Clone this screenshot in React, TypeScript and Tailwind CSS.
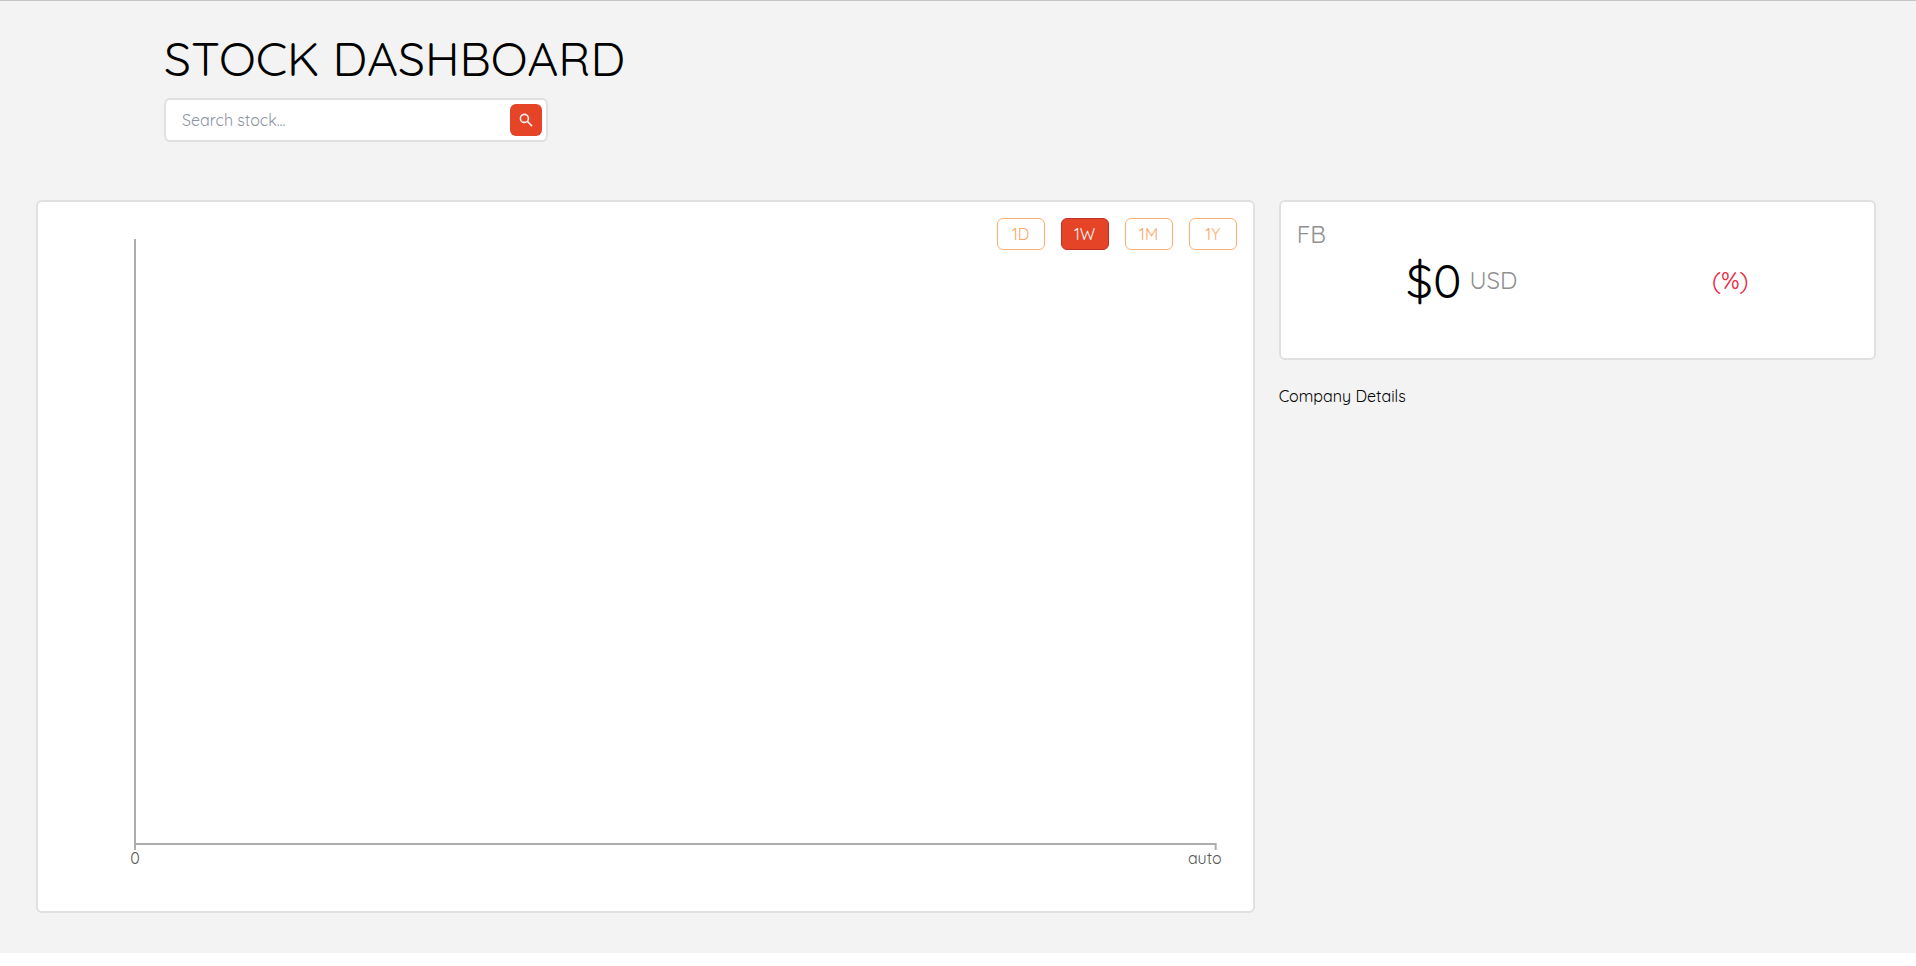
import { useState } from "react";

const RANGES = ["1D", "1W", "1M", "1Y"];

function Header() {
  return (
    <header className="pl-32">
      <h1 className="text-5xl">STOCK DASHBOARD</h1>
      <Search />
    </header>
  );
}

function Search() {
  const [query, setQuery] = useState("");
  return (
    <form
      className="mt-4 flex h-11 w-96 items-center rounded-md border-2 border-[#e0e0e0] bg-white pr-1"
      onSubmit={(e) => e.preventDefault()}
    >
      <input
        type="text"
        aria-label="Search stock"
        placeholder="Search stock..."
        value={query}
        onChange={(e) => setQuery(e.target.value)}
        className="min-w-0 flex-1 bg-transparent px-4 text-base outline-none placeholder:text-[#8b93a1]"
      />
      <button
        type="submit"
        aria-label="Search"
        className="flex size-8 items-center justify-center rounded-md bg-[#e64427] text-[#f3f3f3]"
      >
        <svg viewBox="0 0 20 20" fill="currentColor" className="size-4">
          <path
            fillRule="evenodd"
            clipRule="evenodd"
            d="M8 4a4 4 0 100 8 4 4 0 000-8zM2 8a6 6 0 1110.89 3.476l4.817 4.817a1 1 0 01-1.414 1.414l-4.816-4.816A6 6 0 012 8z"
          />
        </svg>
      </button>
    </form>
  );
}

function Chart() {
  const [range, setRange] = useState("1W");
  return (
    <section className="relative rounded-md border-2 border-[#e0e0e0] bg-white pt-9 pr-[37px] pb-[67px] pl-24 lg:col-span-2">
      <div className="absolute top-4 right-4 flex gap-4">
        {RANGES.map((item) => (
          <button
            key={item}
            type="button"
            aria-pressed={item === range}
            onClick={() => setRange(item)}
            className={
              item === range
                ? "flex h-8 w-12 items-center justify-center rounded-md border border-[#be3126] bg-[#e64427] text-base text-[#f3f3f3]"
                : "flex h-8 w-12 items-center justify-center rounded-md border border-[#fcaf73] text-base text-[#fca766]"
            }
          >
            {item}
          </button>
        ))}
      </div>
      <svg className="block h-[606px] w-full overflow-visible" role="img" aria-label="Price chart">
        <g stroke="#adadad" strokeWidth="2">
          <line x1="1" x2="1" y1="1" y2="612" />
          <line x1="0" x2="100%" y1="606" y2="606" />
          <line x1="100%" x2="100%" y1="605" y2="612" />
        </g>
        <g fill="#555555" fontSize="16">
          <text x="1" y="626" textAnchor="middle">0</text>
          <text x="100%" y="626" dx="6" textAnchor="end">auto</text>
        </g>
      </svg>
    </section>
  );
}

function Overview() {
  return (
    <section className="h-40 rounded-md border-2 border-[#e0e0e0] bg-white px-4 pt-4">
      <h2 className="text-2xl text-[#909090]">FB</h2>
      <div className="mt-1.5 flex items-center justify-around px-4">
        <p className="flex items-center text-5xl">
          $0<span className="m-2 text-2xl text-[#909090]">USD</span>
        </p>
        <p className="text-2xl text-[#ea2845]">(%)</p>
      </div>
    </section>
  );
}

export default function App() {
  return (
    <main className="border-t border-[#c4c4c4] bg-[#f3f3f3] pt-[33px] pr-10 pb-10 pl-9 font-['Quicksand',Lato,sans-serif] text-black">
      <Header />
      <div className="mt-[58px] grid grid-cols-1 gap-6 lg:grid-cols-3">
        <Chart />
        <div>
          <Overview />
          <h2 className="mt-6 text-base">Company Details</h2>
        </div>
      </div>
    </main>
  );
}
